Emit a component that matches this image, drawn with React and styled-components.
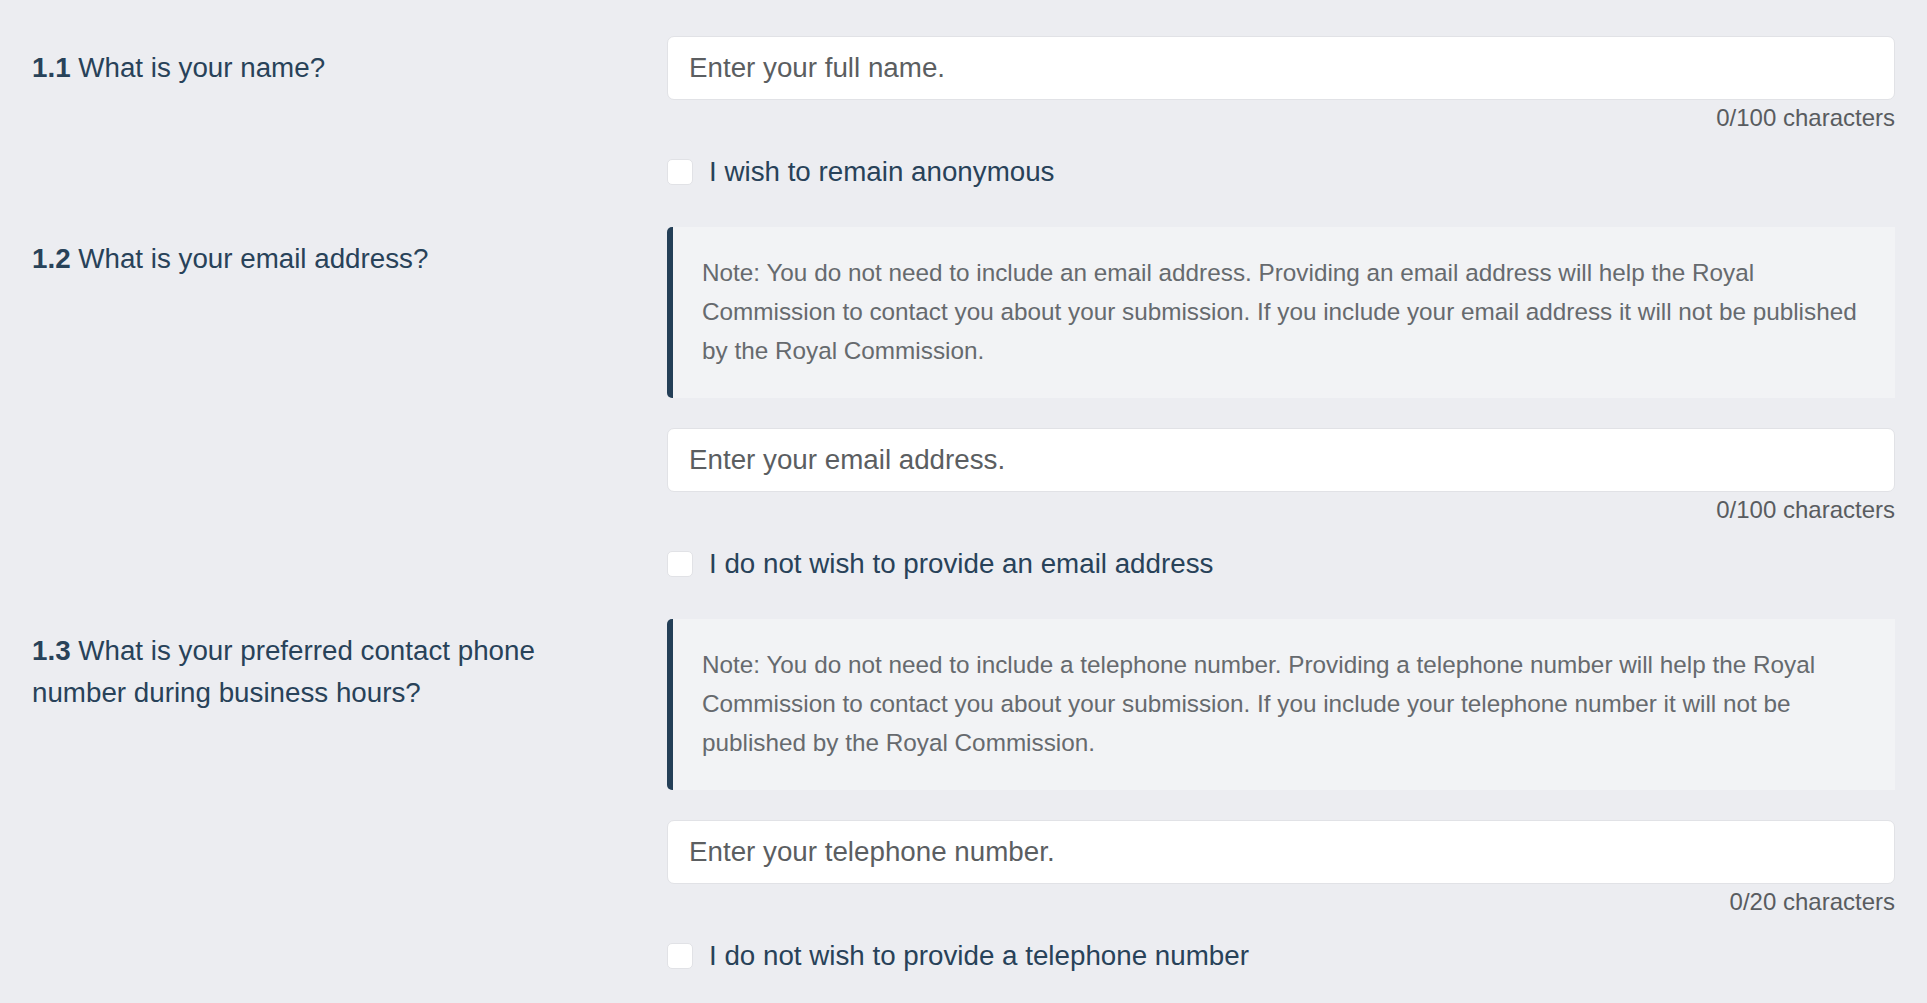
import React from 'react'
import styled, { createGlobalStyle } from 'styled-components'

const GlobalStyle = createGlobalStyle`
  html, body {
    margin: 0;
    padding: 0;
    background: #ecedf1;
  }
  body {
    font-family: "Liberation Sans", Arial, Helvetica, sans-serif;
  }
`

const fields = [
  {
    num: '1.1',
    question: 'What is your name?',
    placeholder: 'Enter your full name.',
    max: 100,
    optOut: 'I wish to remain anonymous',
  },
  {
    num: '1.2',
    question: 'What is your email address?',
    note: 'Note: You do not need to include an email address. Providing an email address will help the Royal Commission to contact you about your submission. If you include your email address it will not be published by the Royal Commission.',
    placeholder: 'Enter your email address.',
    max: 100,
    optOut: 'I do not wish to provide an email address',
  },
  {
    num: '1.3',
    question: 'What is your preferred contact phone number during business hours?',
    note: 'Note: You do not need to include a telephone number. Providing a telephone number will help the Royal Commission to contact you about your submission. If you include your telephone number it will not be published by the Royal Commission.',
    placeholder: 'Enter your telephone number.',
    max: 20,
    optOut: 'I do not wish to provide a telephone number',
  },
]

function Field({ num, question, note, placeholder, max, optOut }) {
  const [value, setValue] = React.useState('')
  const [checked, setChecked] = React.useState(false)

  return (
    <Row>
      <Question>
        <Num>{num}</Num> {question}
      </Question>
      <Answer>
        {note && <Note>{note}</Note>}
        <TextInput
          placeholder={placeholder}
          value={value}
          maxLength={max}
          onChange={(e) => setValue(e.target.value)}
        />
        <Counter>{value.length}/{max} characters</Counter>
        <CheckRow>
          <CheckBox
            type="checkbox"
            checked={checked}
            onChange={() => setChecked(!checked)}
          />
          <CheckText>{optOut}</CheckText>
        </CheckRow>
      </Answer>
    </Row>
  )
}

export default function App() {
  return (
    <>
      <GlobalStyle />
      <Page>
        {fields.map((f) => (
          <Field key={f.num} {...f} />
        ))}
      </Page>
    </>
  )
}

const Page = styled.div`
  display: flex;
  flex-direction: column;
  gap: 41px;
  padding: 36px 32px 40px 32px;
`

const Row = styled.div`
  display: grid;
  grid-template-columns: 560px 1fr;
  column-gap: 75px;
`

const Question = styled.div`
  padding-top: 11px;
  font-size: 27.75px;
  line-height: 42px;
  color: #284259;
`

const Num = styled.span`
  font-weight: 700;
`

const Answer = styled.div`
  display: flex;
  flex-direction: column;
`

const Note = styled.div`
  background: #f2f3f5;
  border-left: 6px solid #243f57;
  border-radius: 5px 0 0 5px;
  padding: 26px 29px 28px 29px;
  margin-bottom: 30px;
  font-size: 24.3px;
  line-height: 39px;
  color: #666a6e;
`

const TextInput = styled.input`
  box-sizing: border-box;
  height: 64px;
  width: 100%;
  padding: 0 21px;
  border: 1px solid #e1e2e6;
  border-radius: 7px;
  background: #fff;
  font-family: "Liberation Sans", Arial, Helvetica, sans-serif;
  font-size: 27.75px;
  color: #333;
  outline: none;

  &::placeholder {
    color: #5b5e61;
  }
`

const Counter = styled.div`
  margin-top: 4px;
  text-align: right;
  font-size: 24px;
  line-height: 28px;
  color: #595c60;
`

const CheckRow = styled.label`
  display: flex;
  align-items: center;
  gap: 16px;
  margin-top: 26px;
  height: 28px;
  cursor: pointer;
`

const CheckBox = styled.input`
  appearance: none;
  margin: 0;
  width: 26px;
  height: 26px;
  border: 1px solid #e1e2e6;
  border-radius: 5px;
  background: #fff;
  flex-shrink: 0;

  &:checked {
    background: #243f57;
    border-color: #243f57;
  }
`

const CheckText = styled.span`
  font-size: 27.75px;
  line-height: 28px;
  color: #284259;
`
